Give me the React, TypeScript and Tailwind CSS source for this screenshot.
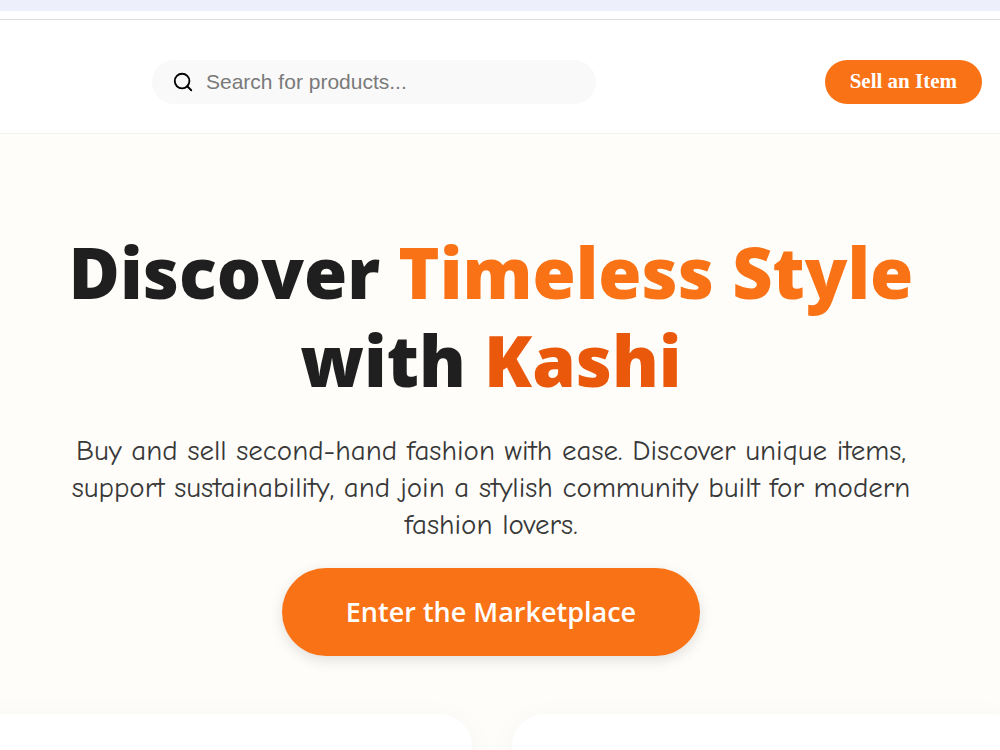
import React from "react";
import { Search } from "lucide-react";

const cards = ["left", "right"];

const Header = () => {
  return (
    <header className="border-b border-[#f2f2f2] bg-white pt-10 pb-[29px] pl-38 pr-[18px]">
      <div className="flex items-center justify-between gap-4">
        <label className="flex h-11 w-full max-w-111 items-center gap-3 rounded-full bg-[#f9f9f9] pl-5 pr-4">
          <Search className="size-[22px] shrink-0 text-black" strokeWidth={2} />
          <input
            type="search"
            aria-label="Search for products"
            placeholder="Search for products..."
            className="w-full bg-transparent font-['Liberation_Sans',sans-serif] text-[21px] text-black outline-none placeholder:text-[#7a7a7a]"
          />
        </label>
        <button
          type="button"
          className="h-11 shrink-0 rounded-full bg-[#f97316] px-[25px] font-['Liberation_Serif',serif] text-[21px] font-bold text-white"
        >
          Sell an Item
        </button>
      </div>
    </header>
  );
};

const Hero = () => {
  return (
    <section className="flex flex-col items-center pt-[94px] pb-[58px] pr-[18px] text-center">
      <h1 className="font-['Open_Sans',sans-serif] text-[70px] leading-[88px] font-extrabold text-[#1f1f1f]">
        Discover <span className="text-[#f97316]">Timeless Style</span>
        <br />
        with <span className="text-[#ea580c]">Kashi</span>
      </h1>
      <p className="mt-7 font-['Comic_Sans_MS','Comic_Neue',cursive] text-[29px] leading-[37px] text-[#383838]">
        Buy and sell second-hand fashion with ease. Discover unique items,
        <br />
        support sustainability, and join a stylish community built for modern
        <br />
        fashion lovers.
      </p>
      <button
        type="button"
        className="mt-[25px] h-22 rounded-full bg-[#f97316] px-16 font-['Open_Sans',sans-serif] text-[27px] font-semibold text-white shadow-[0_4px_14px_rgba(0,0,0,0.12)]"
      >
        Enter the Marketplace
      </button>
    </section>
  );
};

const App: React.FC = () => {
  return (
    <div className="flex min-h-screen flex-col bg-[#fefdf9]">
      <div className="h-[11px] bg-[#edf0fa]" />
      <div className="h-[9px] border-b border-[#dddddd] bg-white" />
      <Header />
      <main className="flex flex-1 flex-col overflow-hidden">
        <Hero />
        <div className="-mr-6 -ml-10 grid min-h-9 flex-1 grid-cols-2 gap-10">
          {cards.map((card) => (
            <div
              key={card}
              className="rounded-t-[32px] bg-white shadow-[0_8px_30px_rgba(0,0,0,0.05)]"
            />
          ))}
        </div>
      </main>
    </div>
  );
};

export default App;
